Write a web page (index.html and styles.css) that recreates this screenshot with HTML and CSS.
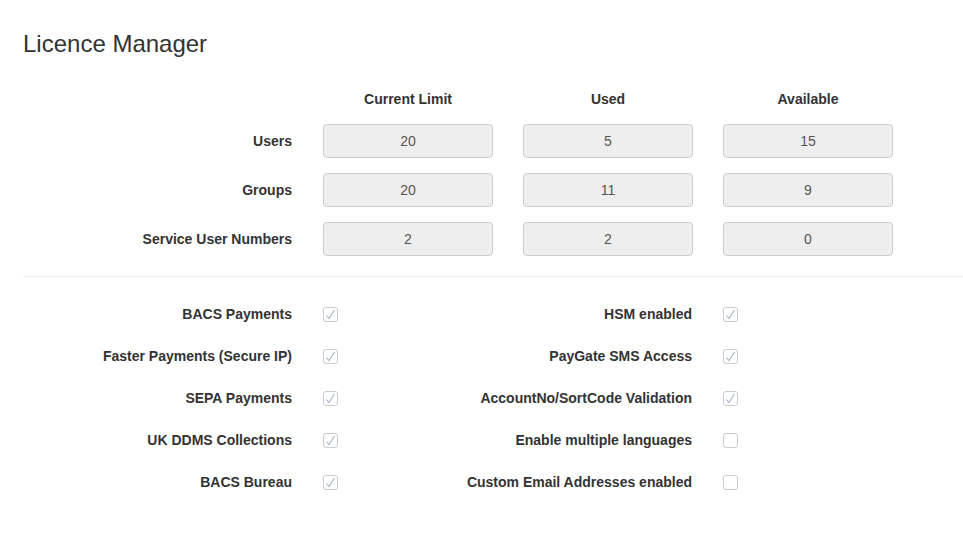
FILE: index.html
```html
<!DOCTYPE html>
<html lang="en">
<head>
    <meta charset="UTF-8">
    <title>Licence Manager</title>
    <link rel="stylesheet" href="styles.css">
</head>
<body>
    <div class="page">
        <h1 class="title">Licence Manager</h1>

        <div class="limits">
            <div></div>
            <div class="col-head">Current Limit</div>
            <div class="col-head">Used</div>
            <div class="col-head">Available</div>

            <div class="row-label">Users</div>
            <div class="value">20</div>
            <div class="value">5</div>
            <div class="value">15</div>

            <div class="row-label">Groups</div>
            <div class="value">20</div>
            <div class="value">11</div>
            <div class="value">9</div>

            <div class="row-label">Service User Numbers</div>
            <div class="value">2</div>
            <div class="value">2</div>
            <div class="value">0</div>
        </div>

        <hr class="divider">

        <div class="features">
            <div class="row-label">BACS Payments</div>
            <div><span class="check on"></span></div>
            <div class="row-label">HSM enabled</div>
            <div><span class="check on"></span></div>

            <div class="row-label">Faster Payments (Secure IP)</div>
            <div><span class="check on"></span></div>
            <div class="row-label">PayGate SMS Access</div>
            <div><span class="check on"></span></div>

            <div class="row-label">SEPA Payments</div>
            <div><span class="check on"></span></div>
            <div class="row-label">AccountNo/SortCode Validation</div>
            <div><span class="check on"></span></div>

            <div class="row-label">UK DDMS Collections</div>
            <div><span class="check on"></span></div>
            <div class="row-label">Enable multiple languages</div>
            <div><span class="check"></span></div>

            <div class="row-label">BACS Bureau</div>
            <div><span class="check on"></span></div>
            <div class="row-label">Custom Email Addresses enabled</div>
            <div><span class="check"></span></div>
        </div>
    </div>
</body>
</html>
```

FILE: styles.css
```css
body {
    margin: 0;
    background: #fff;
    color: #333;
    font-family: "Liberation Sans", Arial, sans-serif;
    font-size: 14px;
    line-height: 20px;
}
.page {
    padding: 29px 0 0 23px;
}
.title {
    margin: 0 0 30px;
    font-size: 24px;
    font-weight: normal;
    line-height: 30px;
}
.limits {
    display: grid;
    grid-template-columns: 270px 170px 170px 170px;
    column-gap: 30px;
    row-gap: 15px;
    align-items: center;
}
.col-head {
    font-weight: bold;
    text-align: center;
}
.row-label {
    font-weight: bold;
    text-align: right;
    white-space: nowrap;
    padding-right: 1px;
}
.value {
    height: 32px;
    line-height: 32px;
    border: 1px solid #ccc;
    border-radius: 4px;
    background: #eee;
    color: #555;
    text-align: center;
}
.divider {
    margin: 20px 0 16px;
    border: 0;
    border-top: 1px solid #eee;
}
.features {
    display: grid;
    grid-template-columns: 270px 100px 240px 100px;
    grid-auto-rows: 42px;
    column-gap: 30px;
    align-items: center;
}
.features > div {
    display: flex;
    align-items: center;
}
.features > .row-label {
    justify-content: flex-end;
}
.check {
    display: inline-block;
    width: 13px;
    height: 13px;
    border: 1px solid #ccc;
    border-radius: 3px;
    background: #fff no-repeat center;
}
.check.on {
    background-image: url("data:image/svg+xml,%3Csvg xmlns='http://www.w3.org/2000/svg' width='13' height='13' viewBox='0 0 13 13'%3E%3Cpath d='M2.5 7.5 L5 10.5 L10.5 2' fill='none' stroke='%23a9b6c6' stroke-width='1.1'/%3E%3C/svg%3E");
}
```
